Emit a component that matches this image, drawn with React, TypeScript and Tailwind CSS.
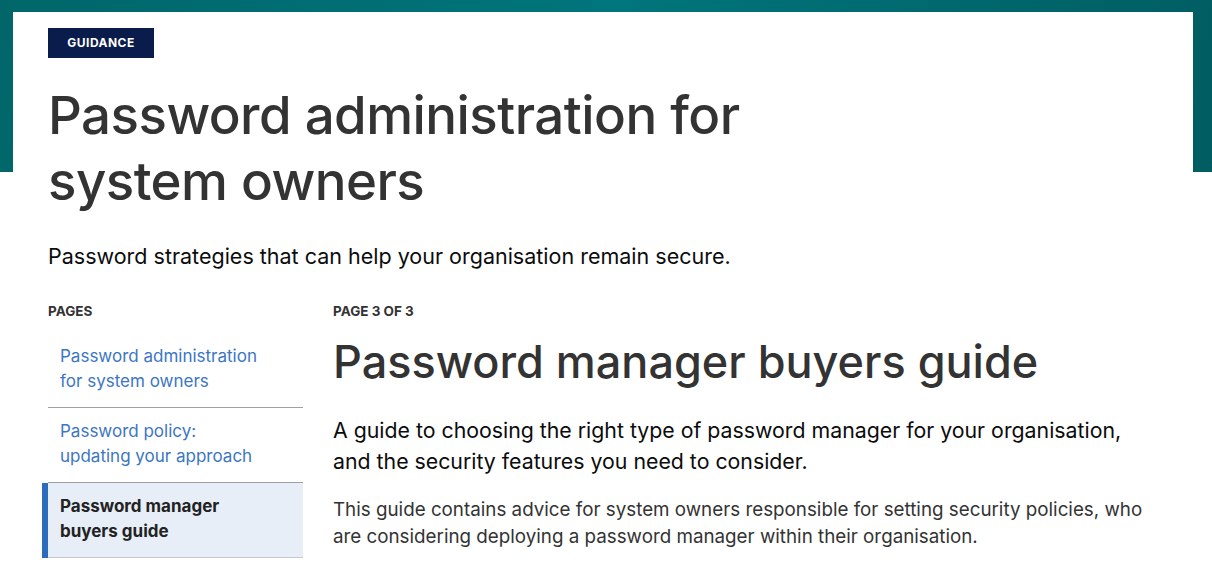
import React from "react";

const font = { fontFamily: "Inter, 'Noto Sans', sans-serif" };

export default function App() {
  return (
    <div
      className="h-[575px] overflow-hidden bg-white bg-no-repeat bg-[length:100%_172px] bg-[linear-gradient(100deg,#00666a_0%,#00757b_50%,#005d62_100%)] pt-[12px] pl-[13px] pr-[19px]"
      style={font}
    >
      <div className="bg-white pl-[35px] pt-[16px] pb-[40px]">
        <div className="inline-flex h-[30px] w-[106px] items-center justify-center bg-[#0a1c4b] text-[12px] font-bold tracking-[0.04em] text-white">
          GUIDANCE
        </div>
        <h1 className="mt-[24px] max-w-[730px] text-[52.8px] font-medium leading-[66px] tracking-[-0.01em] text-[#333333]">
          Password administration for system owners
        </h1>
        <p className="mt-[27px] text-[21.5px] leading-[30px] text-[#0b0c0c]">
          Password strategies that can help your organisation remain secure.
        </p>
        <div className="mt-[29px] flex gap-[30px]">
          <nav className="w-[255px] shrink-0">
            <h2 className="text-[13.5px] font-bold leading-[22px] text-[#333333]">PAGES</h2>
            <ul className="mt-[11px] w-[255px] text-[17px] leading-[25px]">
              <li className="border-b border-[#a0a0a0] pt-[11px] pb-[13px] pl-[12px] pr-[10px] text-[#3b76c4]">
                Password administration
                <br />
                for system owners
              </li>
              <li className="border-b border-[#a0a0a0] pt-[11px] pb-[13px] pl-[12px] pr-[10px] text-[#3b76c4]">
                Password policy:
                <br />
                updating your approach
              </li>
              <li className="border-b border-[#c8c8c8] bg-[#e8eef7] shadow-[-6px_0_0_0_#2c6cbc] pt-[11px] pb-[13px] pl-[12px] pr-[10px] font-bold text-[#222222]">
                Password manager
                <br />
                buyers guide
              </li>
            </ul>
          </nav>
          <main className="min-w-0 flex-1">
            <div className="text-[13.5px] font-bold leading-[22px] text-[#333333]">PAGE 3 OF 3</div>
            <h2 className="mt-[14px] text-[45px] font-medium leading-[52px] text-[#333333]">
              Password manager buyers guide
            </h2>
            <p className="mt-[27px] max-w-[800px] text-[21.3px] leading-[31px] text-[#0b0c0c]">
              A guide to choosing the right type of password manager for your organisation, and the security features you need to consider.
            </p>
            <p className="mt-[19px] max-w-[815px] text-[18.8px] leading-[27px] text-[#333333]">
              This guide contains advice for system owners responsible for setting security policies, who are considering deploying a password manager within their organisation.
            </p>
          </main>
        </div>
      </div>
    </div>
  );
}
